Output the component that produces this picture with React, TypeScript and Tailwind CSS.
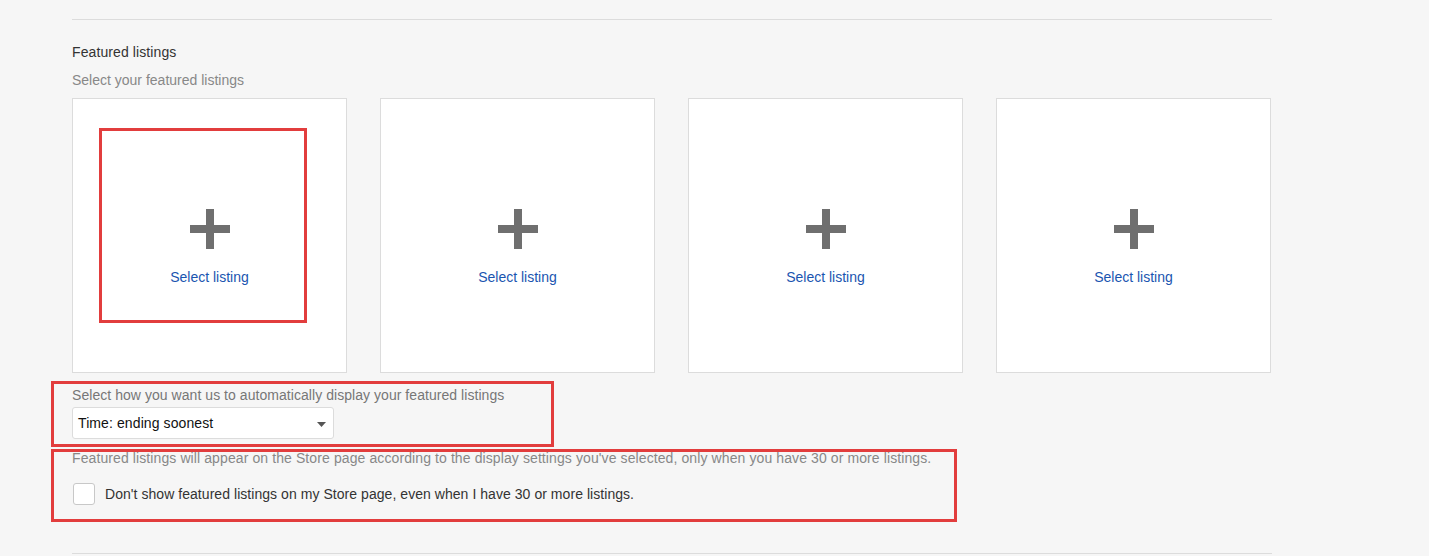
import React from 'react';

const slots = [0, 1, 2, 3];

const PlusIcon = () => (
    <svg width="40" height="40" viewBox="0 0 40 40" aria-hidden="true">
        <rect x="16" y="0" width="8" height="40" fill="#6f6f6f" />
        <rect x="0" y="16" width="40" height="8" fill="#6f6f6f" />
    </svg>
);

const ListingSlot: React.FC<{ highlighted?: boolean }> = ({ highlighted }) => (
    <div className="relative w-[275px] h-[275px] bg-white border border-[#dcdcdc] flex flex-col items-center pt-[110px] cursor-pointer">
        <PlusIcon />
        <span className="mt-[20px] text-[14px] leading-4 text-[#1a55b0]">Select listing</span>
        {highlighted && (
            <div className="absolute left-[26px] top-[29px] w-[208px] h-[195px] border-[3px] border-[#e23d3d] pointer-events-none" />
        )}
    </div>
);

const App: React.FC = () => {
    return (
        <div className="min-h-[556px] w-full bg-[#f6f6f6] font-['Liberation_Sans',Arial,sans-serif] overflow-hidden">
            <div className="relative w-[1200px] ml-[72px] pt-[19px]">
                <div className="border-t border-[#dcdcdc]" />

                <h3 className="mt-[24px] text-[14px] leading-4 text-[#333] tracking-[0.1px]">Featured listings</h3>
                <p className="mt-[12px] text-[14px] leading-4 text-[#888]">Select your featured listings</p>

                <div className="mt-[10px] flex gap-[33px]">
                    {slots.map(i => (
                        <ListingSlot key={i} highlighted={i === 0} />
                    ))}
                </div>

                <p className="mt-[14px] text-[14px] leading-4 text-[#777] tracking-[0.05px]">
                    Select how you want us to automatically display your featured listings
                </p>
                <div className="mt-[4px] relative w-[262px] h-[32px] bg-white border border-[#dcdcdc] rounded-[3px] flex items-center pl-[5px]">
                    <span className="text-[14px] text-[#111] tracking-[0.1px]">Time: ending soonest</span>
                    <svg className="absolute right-[7px] top-[14px]" width="9" height="5" viewBox="0 0 9 5">
                        <path d="M0 0 L9 0 L4.5 5 Z" fill="#555" />
                    </svg>
                </div>

                <p className="mt-[11px] text-[14px] leading-4 text-[#888] tracking-[0.1px]">
                    Featured listings will appear on the Store page according to the display settings you've selected, only when you have 30 or more listings.
                </p>
                <label className="mt-[17px] flex items-center gap-[10px] cursor-pointer">
                    <span className="ml-px w-[22px] h-[22px] bg-white border border-[#c8c8c8] rounded-[3px]" />
                    <span className="text-[14px] text-[#333] tracking-[0.05px]">
                        Don't show featured listings on my Store page, even when I have 30 or more listings.
                    </span>
                </label>

                <div className="mt-[48px] border-t border-[#dcdcdc]" />

                <div className="absolute left-[-21px] top-[381px] w-[503px] h-[66px] border-[3px] border-[#e23d3d] pointer-events-none" />
                <div className="absolute left-[-21px] top-[449px] w-[906px] h-[73px] border-[3px] border-[#e23d3d] pointer-events-none" />
            </div>
        </div>
    );
};

export default App;
